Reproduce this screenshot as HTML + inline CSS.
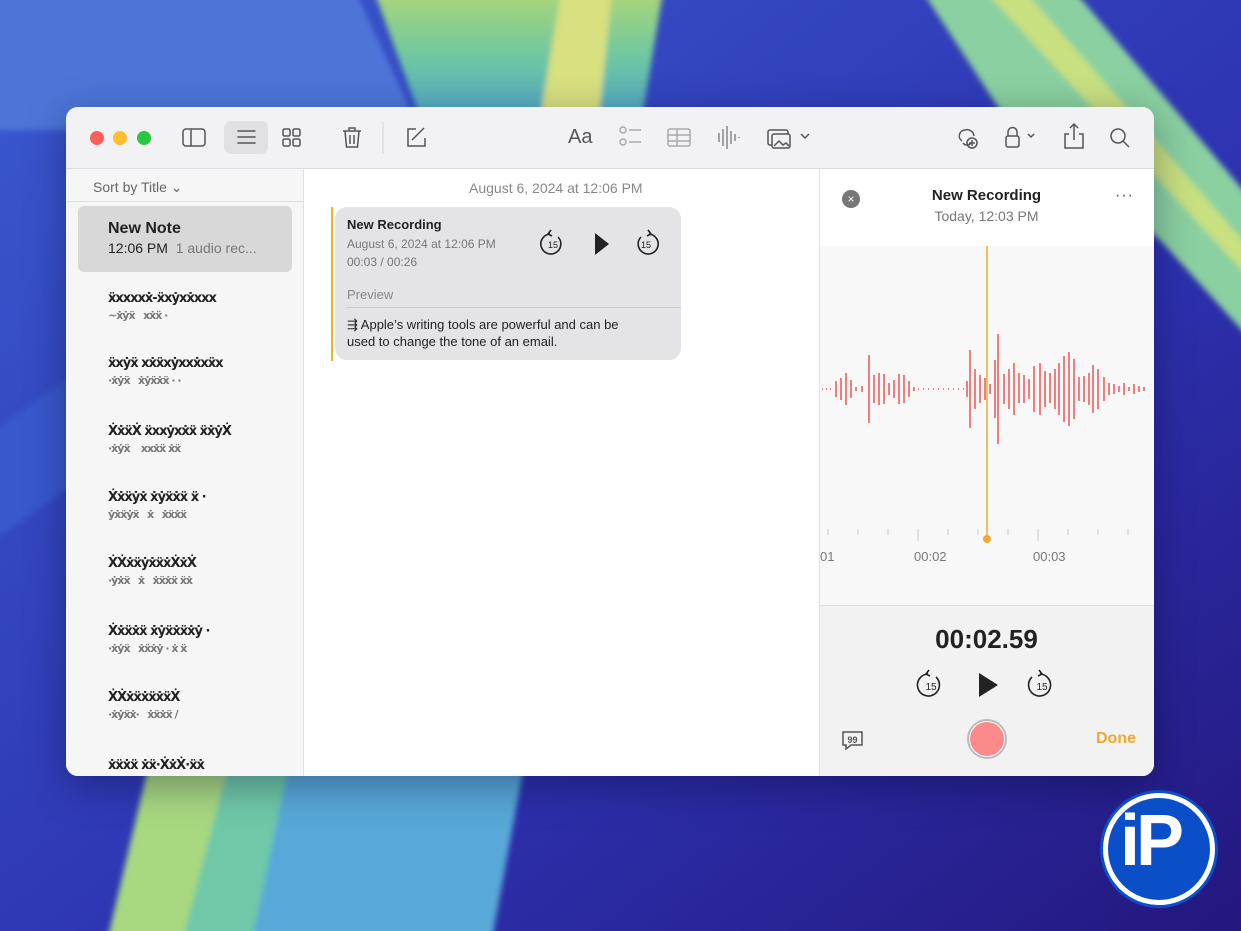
<!DOCTYPE html>
<html><head><meta charset="utf-8"><style>
*{margin:0;padding:0;box-sizing:border-box}
body{width:1241px;height:931px;overflow:hidden;position:relative;font-family:"Liberation Sans",sans-serif;background:#3447c4}
.bg{position:absolute;left:0;top:0}
.win{position:absolute;left:66px;top:107px;width:1088px;height:669px;border-radius:12px;overflow:hidden;background:#fff;box-shadow:0 10px 40px rgba(0,0,40,.35)}
.tb{position:absolute;left:0;top:0;width:1088px;height:62px;background:#f2f2f4;border-bottom:1px solid #dcdcdc}
.dot{position:absolute;top:24px;width:14px;height:14px;border-radius:50%}
.side{position:absolute;left:0;top:62px;width:238px;height:607px;background:#f6f6f6;border-right:1px solid #e2e2e2}
.t{position:absolute;white-space:nowrap}
.scr{position:absolute;color:#222;font-size:10px;letter-spacing:-1px;white-space:nowrap;font-family:"DejaVu Sans",sans-serif;line-height:17px}
.scr span{color:#777}
.rp{position:absolute;left:753px;top:62px;width:335px;height:607px;background:#fff;border-left:1px solid #e2e2e2}
</style></head><body>
<svg class="bg" width="1241" height="931" viewBox="0 0 1241 931">
<defs><linearGradient id="g1" x1="0" y1="0" x2="1" y2="1"><stop offset="0" stop-color="#3a5ad0"/><stop offset=".6" stop-color="#2d32b0"/><stop offset="1" stop-color="#24177e"/></linearGradient>
<linearGradient id="g2" x1="0" y1="0" x2="0" y2="1"><stop offset="0" stop-color="#b8d870"/><stop offset=".5" stop-color="#70c8a0"/><stop offset="1" stop-color="#4aa0d0"/></linearGradient>
<filter id="b" x="-20%" y="-20%" width="140%" height="140%"><feGaussianBlur stdDeviation="3"/></filter></defs>
<rect width="1241" height="931" fill="url(#g1)"/>
<g filter="url(#b)">
<path d="M-20 -20 L350 -20 L420 130 L-20 130Z" fill="#4d74d8"/>
<path d="M370 -20 L665 -20 L640 130 L425 130Z" fill="url(#g2)"/>
<path d="M563 -20 L613 -20 L598 130 L538 130Z" fill="#d8e080"/>
<path d="M915 -20 L1065 -20 L1260 210 L1260 350 L1160 240 L1000 110Z" fill="#8ad0a0"/>
<path d="M975 -20 L1015 -20 L1260 260 L1260 290Z" fill="#c8e080"/>
<path d="M-20 440 L80 370 L80 480 L-20 550Z" fill="#3858cc"/>
<path d="M150 760 L525 760 L490 950 L105 950Z" fill="#58a8d8"/>
<path d="M150 760 L230 760 L180 950 L105 950Z" fill="#a8d880"/>
<path d="M230 760 L290 760 L250 950 L180 950Z" fill="#70c8a8"/>
</g>
</svg>
<div class="win">
 <div class="tb">
  <div class="dot" style="left:24px;background:#fe5f57"></div>
  <div class="dot" style="left:47px;background:#febc2e"></div>
  <div class="dot" style="left:71px;background:#28c840"></div>
  <svg width="1088" height="62" style="position:absolute;left:0;top:0" fill="none" stroke="#555" stroke-width="1.5">
   <rect x="117" y="22" width="22" height="17" rx="3"/><line x1="125" y1="22" x2="125" y2="39"/>
   <rect x="158" y="14" width="44" height="33" rx="7" fill="#e1e1e4" stroke="none"/>
   <g stroke-linecap="round"><line x1="172" y1="24" x2="189" y2="24"/><line x1="172" y1="30" x2="189" y2="30"/><line x1="172" y1="36" x2="189" y2="36"/></g>
   <rect x="217" y="22" width="7" height="7" rx="1.5"/><rect x="227" y="22" width="7" height="7" rx="1.5"/><rect x="217" y="32" width="7" height="7" rx="1.5"/><rect x="227" y="32" width="7" height="7" rx="1.5"/>
   <path d="M277 24h18M283 24v-3h6v3M279 24l1.5 16h11l1.5-16M284 28v9M288 28v9"/>
   <line x1="317" y1="15" x2="317" y2="47" stroke="#ddd"/>
   <path d="M350 22h-8v17h17v-8M346 33l12-12"/>
   <g stroke="#aaa"><circle cx="557" cy="23" r="3"/><circle cx="557" cy="35" r="3"/><line x1="563" y1="23" x2="575" y2="23"/><line x1="563" y1="35" x2="575" y2="35"/>
   <rect x="602" y="22" width="22" height="17" rx="2"/><line x1="602" y1="28" x2="624" y2="28"/><line x1="602" y1="34" x2="624" y2="34"/><line x1="611" y1="22" x2="611" y2="39"/></g>
   <path d="M653 26v9M657 22v17M661 19v23M665 24v13M669 27v7M673 30v1" stroke="#888"/>
   <rect x="702" y="23" width="20" height="15" rx="2"/><rect x="706" y="27" width="18" height="14" rx="2" fill="#f2f2f4"/><path d="M708 39l5-5 4 4 3-2 3 3"/>
   <path d="M735 27l4 4 4-4"/>
   <path d="M896 34a6 6 0 0 1 3-11 7 7 0 0 1 9 6M897 36a5 5 0 0 0 8 0" /><circle cx="906" cy="36" r="5"/><path d="M906 33v6M903 36h6"/>
   <rect x="940" y="29" width="13" height="11" rx="2"/><path d="M942 29v-4a4.5 4.5 0 0 1 9 0v4M962 27l3 3 3-3"/>
   <path d="M1003 27h-4v14h18V27h-4M1008 33V17M1004 21l4-4 4 4"/>
   <circle cx="1052" cy="29" r="7"/><path d="M1057 34l6 6"/>
  </svg>
  <div class="t" style="left:502px;top:19px;font-size:20px;color:#555">Aa</div>
 </div>
 <div class="side">
  <div class="t" style="left:27px;top:10px;font-size:14px;color:#666">Sort by Title ⌄</div>
  <div style="position:absolute;left:0;top:32px;width:238px;height:1px;background:#e0e0e0"></div>
  <div style="position:absolute;left:12px;top:37px;width:214px;height:66px;background:#d8d8d8;border-radius:6px"></div>
  <div class="t" style="left:42px;top:51px;font-size:16px;font-weight:bold;color:#222">New Note</div>
  <div class="t" style="left:42px;top:71px;font-size:14px;color:#222">12:06 PM <span style="color:#777">&nbsp;1 audio rec...</span></div>
  <div class="scr" style="left:42px;top:121px;font-size:13px;font-weight:bold">ẍxxxxẋ-ẍxẏxẋxxx<br><span style="font-size:11px">~ẋẏẍ &nbsp; xẋẍ ·</span></div>
  <div class="scr" style="left:42px;top:186px;font-size:13px;font-weight:bold">ẍxẏẍ xẋẍxẏxxẋxẍx<br><span style="font-size:11px">·ẋẏẍ &nbsp; ẋẏẍẋẍ · ·</span></div>
  <div class="scr" style="left:42px;top:254px;font-size:13px;font-weight:bold">ẊẋẍẊ ẍxxẏxẋẍ ẍẋẏẊ<br><span style="font-size:11px">·ẋẏẍ &nbsp;&nbsp; xxẋẍ ẋẍ</span></div>
  <div class="scr" style="left:42px;top:320px;font-size:13px;font-weight:bold">Ẋẋẍẏẋ ẋẏẍẋẍ ẍ ·<br><span style="font-size:11px">ẏẋẍẏẍ &nbsp; ẋ &nbsp; ẋẍẋẍ</span></div>
  <div class="scr" style="left:42px;top:386px;font-size:13px;font-weight:bold">ẊẊẋẍẏẋẍẋẊẋẊ<br><span style="font-size:11px">·ẏẋẍ &nbsp; ẋ &nbsp; ẋẍẋẍ ẍẋ</span></div>
  <div class="scr" style="left:42px;top:454px;font-size:13px;font-weight:bold">Ẋẋẍẋẍ ẋẏẍẋẍẋẏ ·<br><span style="font-size:11px">·ẋẏẍ &nbsp; ẋẍẋẏ · ẋ ẍ</span></div>
  <div class="scr" style="left:42px;top:520px;font-size:13px;font-weight:bold">ẊẊẋẍẋẍẋẍẊ<br><span style="font-size:11px">·ẋẏẍẋ· &nbsp; ẋẍẋẍ /</span></div>
  <div class="scr" style="left:42px;top:588px;font-size:13px;font-weight:bold">ẋẍẋẍ ẋẍ·ẊẋẊ·ẍẋ</div>
 </div>
 <div class="t" style="left:403px;top:73px;font-size:14px;color:#888">August 6, 2024 at 12:06 PM</div>
 <div style="position:absolute;left:265px;top:100px;width:2px;height:154px;background:#f0b030"></div>
 <div style="position:absolute;left:269px;top:100px;width:346px;height:153px;background:#e4e4e7;border-radius:12px"></div>
 <div class="t" style="left:281px;top:110px;font-size:13px;font-weight:bold;color:#222">New Recording</div>
 <div class="t" style="left:281px;top:130px;font-size:12px;color:#777">August 6, 2024 at 12:06 PM</div>
 <div class="t" style="left:281px;top:148px;font-size:12px;color:#777">00:03 / 00:26</div>
 <div class="t" style="left:281px;top:180px;font-size:13px;color:#888">Preview</div>
 <div style="position:absolute;left:281px;top:200px;width:334px;height:1px;background:#ccc"></div>
 <div class="t" style="left:281px;top:209px;font-size:13px;color:#222;line-height:17px">⇶ Apple’s writing tools are powerful and can be<br>used to change the tone of an email.</div>
 <svg width="140" height="40" style="position:absolute;left:470px;top:117px" fill="none" stroke="#222" stroke-width="1.6">
  <path d="M14 10a10 10 0 1 0 8 3"/><path d="M15 6l-3 4 4 2" /><text x="17" y="24" font-size="9" font-family="Liberation Sans" text-anchor="middle" fill="#222" stroke="none">15</text>
  <path d="M59 9l14 11-14 11z" fill="#222" stroke="none"/>
  <path d="M113 10a10 10 0 1 1-8 3"/><path d="M112 6l3 4-4 2"/><text x="110" y="24" font-size="9" font-family="Liberation Sans" text-anchor="middle" fill="#222" stroke="none">15</text>
 </svg>
 <div class="rp">
  <div style="position:absolute;left:22px;top:21px;width:18px;height:18px;border-radius:50%;background:#777;color:#fff;font-size:12px;text-align:center;line-height:18px">×</div>
  <div class="t" style="left:0;width:333px;text-align:center;top:18px;font-size:15px;font-weight:bold;color:#222">New Recording</div>
  <div class="t" style="left:0;width:333px;text-align:center;top:39px;font-size:14px;color:#777">Today, 12:03 PM</div>
  <div class="t" style="left:295px;top:18px;font-size:16px;color:#555;letter-spacing:1px">···</div>
  <div style="position:absolute;left:0;top:77px;width:335px;height:360px;background:#f8f8f8"></div>
  <svg width="335" height="360" style="position:absolute;left:0;top:77px" stroke="#e55" stroke-width="1.5">
   <path d="M2 143h1M6 143h1M10 143h1M16 135v16M21 132v22M26 127v32M31 134v18M36 141v4M42 140v6M49 109v68M54 129v28M59 127v32M64 128v30M69 137v12M74 134v18M79 128v30M84 129v28M89 135v16M94 141v4M98 143h1M103 143h1M108 143h1M113 143h1M118 143h1M123 143h1M128 143h1M133 143h1M138 143h1M143 143h1M147 135v16M150 104v78M155 123v40M160 129v28M165 132v22M170 138v10M175 114v58M178 88v110M184 128v30M189 123v40M194 117v52M199 127v30M204 129v28M209 133v20M214 120v46M220 117v52M225 125v36M230 127v30M235 123v40M239 117v52M244 110v66M249 106v74M254 113v60M259 131v24M264 130v26M269 127v32M273 119v48M278 123v40M284 131v24M289 137v12M294 138v10M299 140v6M304 137v12M309 141v4M314 138v10M319 140v6M324 141v4"/>
   <line x1="167" y1="-4" x2="167" y2="293" stroke="#f2a830"/>
   <circle cx="167" cy="-4" r="4" fill="#f2a830" stroke="none"/>
   <circle cx="167" cy="293" r="4" fill="#f2a830" stroke="none"/>
   <g stroke="#ccc" stroke-width="1"><path d="M8 283v6M38 283v6M68 283v6M98 283v12M128 283v6M158 283v6M188 283v6M218 283v12M248 283v6M278 283v6M308 283v6"/></g>
  </svg>
  <div class="t" style="left:0;top:380px;font-size:13px;color:#777">01</div>
  <div class="t" style="left:94px;top:380px;font-size:13px;color:#777">00:02</div>
  <div class="t" style="left:213px;top:380px;font-size:13px;color:#777">00:03</div>
  <div style="position:absolute;left:0;top:436px;width:335px;height:171px;background:#f2f2f2;border-top:1px solid #ddd"></div>
  <div class="t" style="left:0;width:333px;text-align:center;top:455px;font-size:26px;font-weight:bold;color:#222">00:02.59</div>
  <svg width="160" height="40" style="position:absolute;left:90px;top:496px" fill="none" stroke="#222" stroke-width="1.6">
   <path d="M18 9a11 11 0 1 0 8 3"/><path d="M19 5l-3 4 4 2"/><text x="21" y="25" font-size="10" font-family="Liberation Sans" text-anchor="middle" fill="#222" stroke="none">15</text>
   <path d="M69 8l19 12-19 12z" fill="#222" stroke="none"/>
   <path d="M130 9a11 11 0 1 1-8 3"/><path d="M129 5l3 4-4 2"/><text x="132" y="25" font-size="10" font-family="Liberation Sans" text-anchor="middle" fill="#222" stroke="none">15</text>
  </svg>
  <svg width="26" height="24" style="position:absolute;left:20px;top:560px" fill="none" stroke="#555" stroke-width="1.5"><path d="M3 3h19v13H11l-5 4v-4H3z"/><text x="12.5" y="14" font-size="9" fill="#555" stroke="none" text-anchor="middle" font-family="Liberation Sans" font-weight="bold">99</text></svg>
  <div style="position:absolute;left:147px;top:550px;width:40px;height:40px;border-radius:50%;border:2px solid #bbb;background:#fff"></div>
  <div style="position:absolute;left:150px;top:553px;width:34px;height:34px;border-radius:50%;background:#fb8a8a"></div>
  <div class="t" style="left:276px;top:561px;font-size:16px;font-weight:bold;color:#f2a830">Done</div>
 </div>
</div>
<div style="position:absolute;left:1103px;top:793px;width:112px;height:112px;border-radius:50%;background:#0a4fc8;border:5px solid #fff;box-shadow:0 0 0 3px #0a4fc8"></div>
<div class="t" style="left:1120px;top:800px;font-size:72px;font-weight:bold;color:#fff;letter-spacing:-4px">iP</div>
</body></html>
